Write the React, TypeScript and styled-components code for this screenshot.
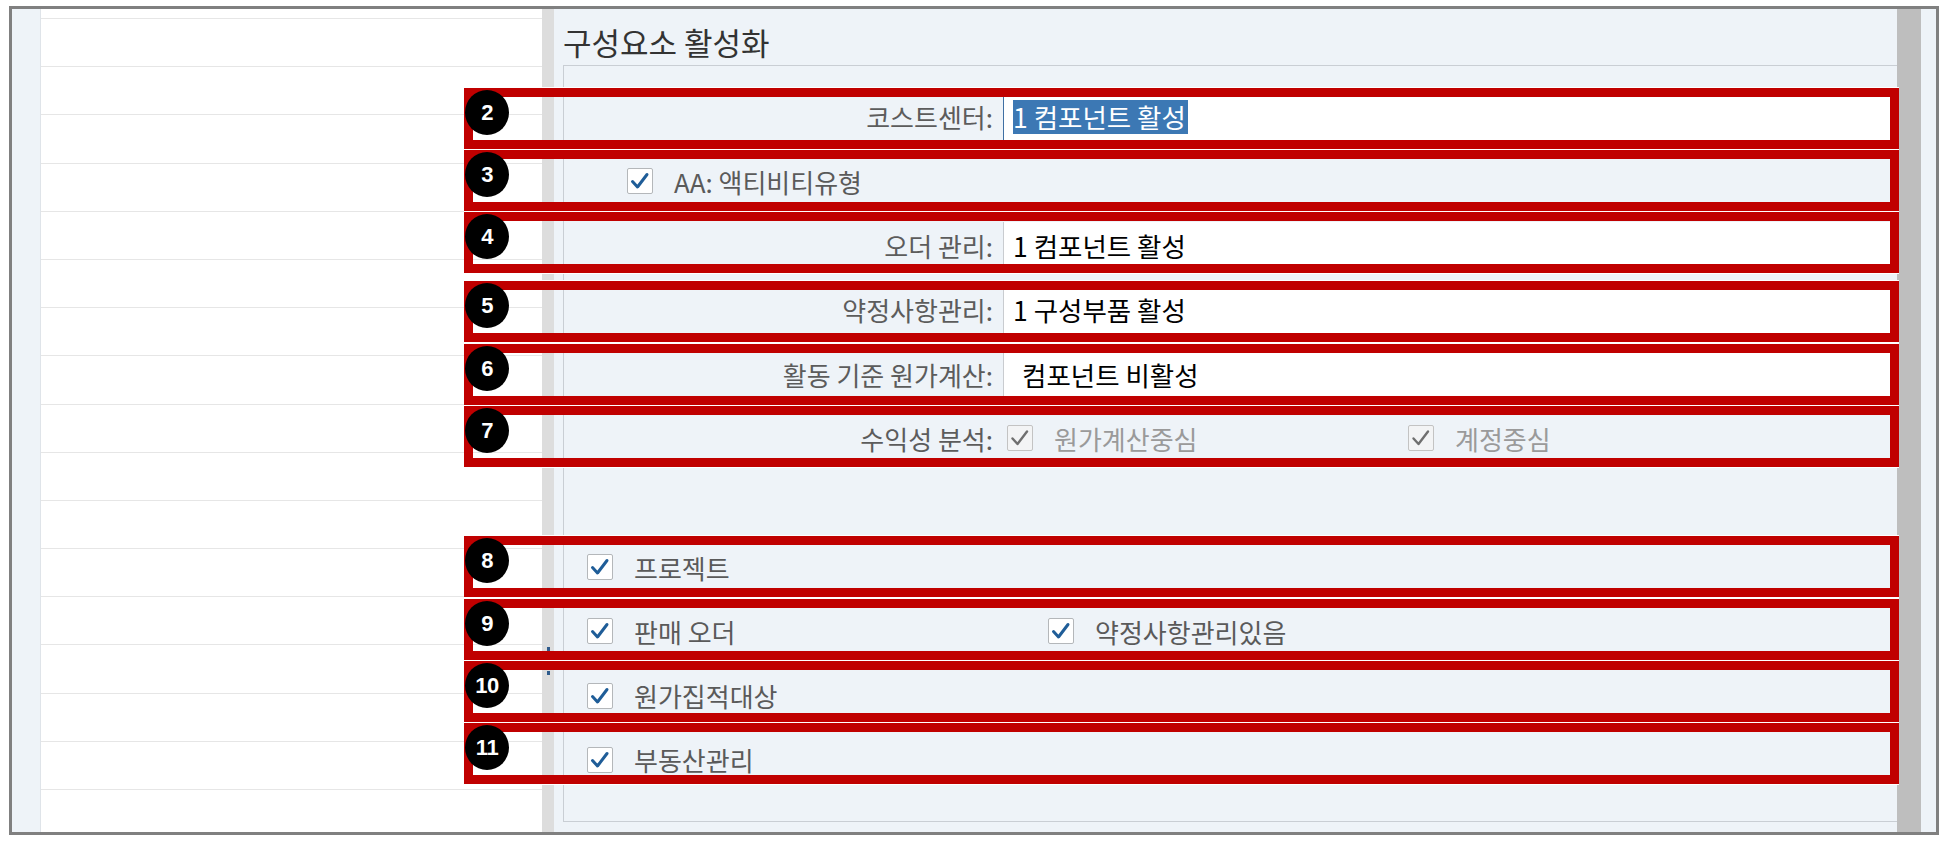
import React from "react";
import styled, { createGlobalStyle } from "styled-components";

const FONT = `"Noto Sans CJK KR", "Noto Sans", sans-serif`;

const GlobalStyle = createGlobalStyle`
  html, body { margin: 0; padding: 0; background: #ffffff; }
  body { font-family: ${FONT}; }
  *, *::before, *::after { box-sizing: border-box; }
`;

const Frame = styled.div`
  position: relative;
  margin: 6px 0 0 9px;
  width: 1930px;
  height: 829px;
  border: 3px solid #808080;
  display: flex;
  background: #eef3f8;
  overflow: hidden;
  font-family: ${FONT};
`;

const Gutter = styled.div`
  flex: none;
  width: 29px;
  background: #eef3f8;
  border-right: 1px solid #dfe4e9;
`;

const ListPane = styled.div`
  flex: none;
  width: 501px;
  background: #ffffff;
  display: flex;
  flex-direction: column;
`;

const ListRow = styled.div<{ $h: number }>`
  flex: none;
  height: ${(p) => p.$h}px;
  border-bottom: 1px solid #e6e6e6;
`;

const Splitter = styled.div`
  flex: none;
  width: 12px;
  background: #dddddd;
  display: flex;
  flex-direction: column;
  align-items: center;
  padding-top: 638px;
  gap: 20px;
`;

const GripDot = styled.span`
  width: 3px;
  height: 4px;
  background: #2f5b8c;
`;

const Panel = styled.section`
  flex: none;
  width: 1343px;
  display: flex;
  flex-direction: column;
  padding: 0 0 10px 9px;
  overflow: hidden;
  background: #eef3f8;
`;

const Heading = styled.h2`
  margin: 0;
  height: 56px;
  padding-top: 10px;
  font-size: 31px;
  line-height: 46px;
  font-weight: 400;
  color: #333333;
  white-space: nowrap;
`;

const Fieldset = styled.div`
  flex: 1;
  border: 1px solid #c9ced4;
  border-right: none;
  padding-top: 18.85px;
  display: flex;
  flex-direction: column;
`;

const FormRow = styled.div`
  flex: none;
  height: 64.3px;
  display: flex;
  align-items: center;
  font-size: 26px;
  white-space: nowrap;
`;

const FieldRow = styled(FormRow)`
  display: grid;
  grid-template-columns: 429px 1fr;
  column-gap: 10px;
  align-items: center;
`;

const CheckRow = styled(FormRow)<{ $pad: number }>`
  padding-left: ${(p) => p.$pad}px;
`;

const Label = styled.span`
  text-align: right;
  color: #5c5c5c;
`;

const ValueBox = styled.div<{ $focused?: boolean; $indent: number }>`
  height: 48px;
  display: flex;
  align-items: center;
  background: #ffffff;
  border-left: 1px solid ${(p) => (p.$focused ? "#3f6fa3" : "#c9ccd0")};
  padding-left: ${(p) => p.$indent}px;
  font-size: 26.5px;
  color: #000000;
`;

const Selected = styled.span`
  background: #3c78b4;
  color: #ffffff;
  line-height: 34px;
  padding-right: 2px;
`;

const CheckGroup = styled.div`
  display: flex;
  align-items: center;
  padding-left: 4px;
`;

const CheckItem = styled.label<{ $w?: number }>`
  display: flex;
  align-items: center;
  gap: 21px;
  flex: none;
  width: ${(p) => (p.$w ? `${p.$w}px` : "auto")};
`;

const Box = styled.span<{ $disabled?: boolean }>`
  flex: none;
  width: 26px;
  height: 26px;
  border: 1px solid ${(p) => (p.$disabled ? "#c3c3c3" : "#b4b7ba")};
  border-radius: 2px;
  background: ${(p) => (p.$disabled ? "#f3f4f5" : "#ffffff")};
  display: flex;
  align-items: center;
  justify-content: center;
`;

const CheckText = styled.span<{ $disabled?: boolean }>`
  color: ${(p) => (p.$disabled ? "#9a9a9a" : "#5a5a5a")};
`;

const Scrollbar = styled.div`
  flex: none;
  width: 24px;
  background: #bebebe;
`;

const RightStrip = styled.div`
  flex: none;
  width: 15px;
  background: #eef3f8;
`;

/* annotation overlay */
const Overlay = styled.div`
  position: absolute;
  left: 452px;
  top: 79px;
  width: 1435px;
  display: flex;
  flex-direction: column;
  pointer-events: none;
`;

const Marker = styled.div<{ $mt: number }>`
  position: relative;
  flex: none;
  height: 61px;
  margin-top: ${(p) => p.$mt}px;
  border: 9px solid #c00000;
  box-shadow: 0 -1px 0 #ffffff, 0 1px 0 #ffffff;
`;

const Badge = styled.span`
  position: absolute;
  left: -8px;
  top: -7px;
  width: 44px;
  height: 45px;
  border-radius: 50%;
  background: #000000;
  color: #ffffff;
  display: flex;
  align-items: center;
  justify-content: center;
  font-family: "Liberation Sans", Arial, sans-serif;
  font-weight: 700;
  font-size: 22px;
  letter-spacing: -0.5px;
`;

const CheckMark: React.FC<{ disabled?: boolean }> = ({ disabled }) => (
  <svg width="22" height="22" viewBox="0 0 22 22" aria-hidden="true">
    <path
      d="M3.5 11.5 L8.5 17 L18 4.5"
      fill="none"
      stroke={disabled ? "#6f6f6f" : "#1f5d98"}
      strokeWidth={disabled ? 2.4 : 3}
      strokeLinecap="round"
      strokeLinejoin="round"
    />
  </svg>
);

type Item = { label: string; disabled?: boolean; width?: number };

const Check: React.FC<Item> = ({ label, disabled, width }) => (
  <CheckItem $w={width}>
    <Box $disabled={disabled}>
      <CheckMark disabled={disabled} />
    </Box>
    <CheckText $disabled={disabled}>{label}</CheckText>
  </CheckItem>
);

type Row =
  | { kind: "field"; label: string; value: string; focused?: boolean; selected?: boolean; indent?: number }
  | { kind: "check"; pad: number; items: Item[] }
  | { kind: "fieldChecks"; label: string; items: Item[] }
  | { kind: "empty" };

const rows: Row[] = [
  { kind: "field", label: "코스트센터:", value: "1 컴포넌트 활성", focused: true, selected: true },
  { kind: "check", pad: 63, items: [{ label: "AA: 액티비티유형" }] },
  { kind: "field", label: "오더 관리:", value: "1 컴포넌트 활성" },
  { kind: "field", label: "약정사항관리:", value: "1 구성부품 활성" },
  { kind: "field", label: "활동 기준 원가계산:", value: "컴포넌트 비활성", indent: 18 },
  {
    kind: "fieldChecks",
    label: "수익성 분석:",
    items: [
      { label: "원가계산중심", disabled: true, width: 401 },
      { label: "계정중심", disabled: true },
    ],
  },
  { kind: "empty" },
  { kind: "check", pad: 23, items: [{ label: "프로젝트" }] },
  { kind: "check", pad: 23, items: [{ label: "판매 오더", width: 461 }, { label: "약정사항관리있음" }] },
  { kind: "check", pad: 23, items: [{ label: "원가집적대상" }] },
  { kind: "check", pad: 23, items: [{ label: "부동산관리" }] },
];

const markers = [
  { n: 2, mt: 0 },
  { n: 3, mt: 1 },
  { n: 4, mt: 1 },
  { n: 5, mt: 8 },
  { n: 6, mt: 2 },
  { n: 7, mt: 1 },
  { n: 8, mt: 69 },
  { n: 9, mt: 2 },
  { n: 10, mt: 1 },
  { n: 11, mt: 1 },
];

const listRows = [10, ...Array.from({ length: 16 }, () => 48.2)];

const renderRow = (r: Row, i: number) => {
  switch (r.kind) {
    case "field":
      return (
        <FieldRow key={i}>
          <Label>{r.label}</Label>
          <ValueBox $focused={r.focused} $indent={r.indent ?? 9}>
            {r.selected ? <Selected>{r.value}</Selected> : r.value}
          </ValueBox>
        </FieldRow>
      );
    case "check":
      return (
        <CheckRow key={i} $pad={r.pad}>
          {r.items.map((it) => (
            <Check key={it.label} {...it} />
          ))}
        </CheckRow>
      );
    case "fieldChecks":
      return (
        <FieldRow key={i}>
          <Label>{r.label}</Label>
          <CheckGroup>
            {r.items.map((it) => (
              <Check key={it.label} {...it} />
            ))}
          </CheckGroup>
        </FieldRow>
      );
    default:
      return <FormRow key={i} />;
  }
};

export default function App() {
  return (
    <>
      <GlobalStyle />
      <Frame>
        <Gutter />
        <ListPane>
          {listRows.map((h, i) => (
            <ListRow key={i} $h={h} />
          ))}
        </ListPane>
        <Splitter>
          <GripDot />
          <GripDot />
        </Splitter>
        <Panel>
          <Heading>구성요소 활성화</Heading>
          <Fieldset>{rows.map(renderRow)}</Fieldset>
        </Panel>
        <Scrollbar />
        <RightStrip />
        <Overlay>
          {markers.map((m) => (
            <Marker key={m.n} $mt={m.mt}>
              <Badge>{m.n}</Badge>
            </Marker>
          ))}
        </Overlay>
      </Frame>
    </>
  );
}
